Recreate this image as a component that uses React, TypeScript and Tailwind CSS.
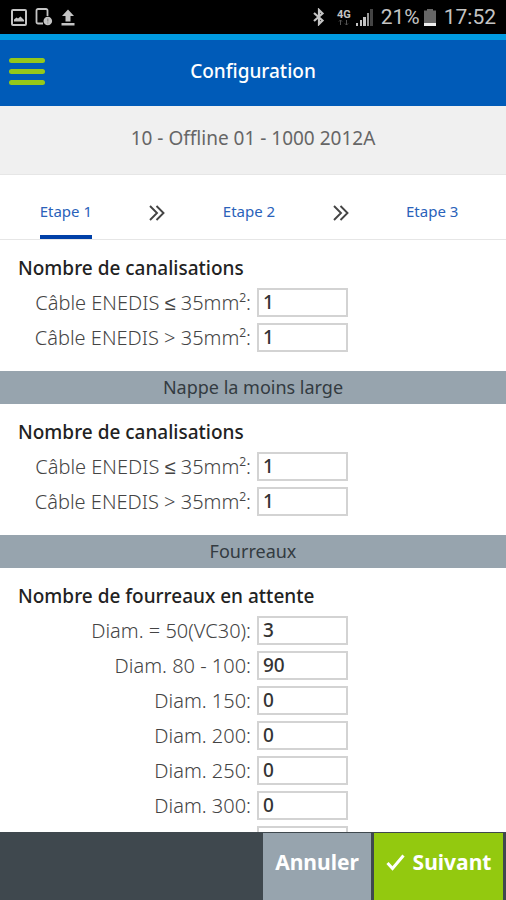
import React from 'react';

type Field = { id: string; label?: string; value: string };

const CABLES_TOP: Field[] = [
    { id: 'top-lte35', label: 'Câble ENEDIS ≤ 35mm²:', value: '1' },
    { id: 'top-gt35', label: 'Câble ENEDIS > 35mm²:', value: '1' },
];

const CABLES_NAPPE: Field[] = [
    { id: 'nappe-lte35', label: 'Câble ENEDIS ≤ 35mm²:', value: '1' },
    { id: 'nappe-gt35', label: 'Câble ENEDIS > 35mm²:', value: '1' },
];

const FOURREAUX: Field[] = [
    { id: 'diam-50', label: 'Diam. = 50(VC30):', value: '3' },
    { id: 'diam-80', label: 'Diam. 80 - 100:', value: '90' },
    { id: 'diam-150', label: 'Diam. 150:', value: '0' },
    { id: 'diam-200', label: 'Diam. 200:', value: '0' },
    { id: 'diam-250', label: 'Diam. 250:', value: '0' },
    { id: 'diam-300', label: 'Diam. 300:', value: '0' },
    { id: 'diam-other', value: '' },
];

const StatusBar: React.FC = () => (
    <div className="flex h-[34px] shrink-0 items-center justify-between bg-black pl-[11px] pr-[10px] text-[#c4c4c4]">
        <div className="flex items-center gap-2">
            <svg width="16" height="17" viewBox="0 0 16 17" fill="none" stroke="currentColor" strokeWidth="2">
                <rect x="1" y="1" width="14" height="15" rx="1" />
                <path d="M3 12.500V10.500L5.500 8.500L7 9.500L9.500 7.500L13 11V12.500Z" fill="currentColor" stroke="none" />
            </svg>
            <svg width="18" height="18" viewBox="0 0 18 18" fill="none" stroke="currentColor" strokeWidth="1.800">
                <path d="M12.500 8V2.500A1.500 1.500 0 0 0 11 1H3A1.500 1.500 0 0 0 1.500 2.500V14A1.500 1.500 0 0 0 3 15.500H8" />
                <circle cx="12.800" cy="13" r="4.300" fill="currentColor" stroke="none" />
                <path d="M12.800 10.500V13.500M12.800 14.500V15.500" stroke="#888" strokeWidth="1.200" />
            </svg>
            <svg width="14" height="17" viewBox="0 0 14 17" fill="currentColor">
                <path d="M7 0.500L13 7H9.500V12.500H4.500V7H1Z" />
                <path d="M0.500 14H13.500V16.500H0.500Z" />
            </svg>
        </div>
        <div className="flex items-center gap-1 font-[Roboto,sans-serif]">
            <svg className="mr-2" width="12" height="18" viewBox="0 0 12 18" fill="none" stroke="currentColor" strokeWidth="2.200">
                <path d="M1 5L9.500 12.500L6 16V2L9.500 5.500L1 13" />
            </svg>
            <div className="flex flex-col items-center text-[11px] font-bold leading-[10px]">
                <span>4G</span>
                <svg width="11" height="5" viewBox="0 0 11 5" fill="none" stroke="#555">
                    <path d="M2.500 0V5M1 1.500L2.500 0L4 1.500M8.500 0V5M7 3.500L8.500 5L10 3.500" />
                </svg>
            </div>
            <svg width="18" height="17" viewBox="0 0 18 17" fill="currentColor">
                <rect x="1" y="14" width="2" height="3" />
                <rect x="5" y="11" width="2" height="6" />
                <rect x="8" y="8" width="3" height="9" />
                <rect x="12" y="4" width="2" height="13" fill="#999" />
                <rect x="15" y="0" width="3" height="17" fill="#444" />
            </svg>
            <span className="ml-1 text-[21px] leading-6">21%</span>
            <svg width="12" height="17" viewBox="0 0 12 17">
                <path d="M3 0H9V1.500H12V17H0V1.500H3Z" fill="#666" />
                <rect y="14" width="12" height="3" fill="#eee" />
            </svg>
            <span className="ml-1 text-[21px] leading-6">17:52</span>
        </div>
    </div>
);

const Chevrons: React.FC = () => (
    <svg width="16" height="16" viewBox="0 0 16 16" fill="none" stroke="#444" strokeWidth="1.900">
        <path d="M1 1L8 8L1 15M7.500 1L14.500 8L7.500 15" />
    </svg>
);

const Tab: React.FC<{ label: string; active?: boolean }> = ({ label, active }) => (
    <button
        className={
            active
                ? 'h-full border-b-4 border-[#0040a8] pt-3 text-[15px] text-[#2a62ba]'
                : 'h-full border-b-4 border-transparent pt-3 text-[15px] text-[#2a62ba]'
        }
    >
        {label}
    </button>
);

const FieldGroup: React.FC<{ title: string; fields: Field[] }> = ({ title, fields }) => (
    <section className="py-4">
        <h2 className="mb-[5px] px-[18px] text-[19px] font-medium leading-6 text-[#222]">{title}</h2>
        {fields.map((field) => (
            <div key={field.id} className="flex h-[35px] items-center">
                <label htmlFor={field.id} className="w-1/2 pr-0.5 text-right text-[20px] font-light leading-6 text-[#444]">
                    {field.label}
                </label>
                <input
                    id={field.id}
                    type="text"
                    inputMode="numeric"
                    defaultValue={field.value}
                    className="ml-1 h-[29px] w-[91px] border-2 border-[#d3d3d3] bg-white px-1 pb-0.5 text-[19px] font-medium leading-6 text-[#333] outline-none"
                />
            </div>
        ))}
    </section>
);

const Divider: React.FC<{ label: string }> = ({ label }) => (
    <div className="h-[33px] bg-[#97a4ae] text-center text-[18px] leading-8 text-[#333b41]">{label}</div>
);

const App: React.FC = () => {
    return (
        <div className="flex h-screen flex-col bg-white font-['Noto_Sans',sans-serif]">
            <StatusBar />
            <header className="flex h-[72px] shrink-0 items-center border-t-[6px] border-[#0099e0] bg-[#005bb8] pb-1">
                <button aria-label="Menu" className="flex w-[54px] flex-col gap-1.5 px-[9px]">
                    <span className="h-[5px] w-full rounded-full bg-[#95c81a]" />
                    <span className="h-[5px] w-full rounded-full bg-[#95c81a]" />
                    <span className="h-[5px] w-full rounded-full bg-[#95c81a]" />
                </button>
                <h1 className="flex-1 pr-[54px] text-center text-[19px] font-medium leading-6 text-white">Configuration</h1>
            </header>
            <div className="h-[68px] shrink-0 bg-[#f0f0f0] text-center text-[19px] leading-[64px] text-[#666]">
                10 - Offline 01 - 1000 2012A
            </div>
            <nav className="grid h-[66px] shrink-0 grid-cols-5 items-center justify-items-center border-y border-[#e6e6e6] pl-5 pr-7">
                <Tab label="Etape 1" active />
                <div className="pt-3">
                    <Chevrons />
                </div>
                <Tab label="Etape 2" />
                <div className="pt-3">
                    <Chevrons />
                </div>
                <Tab label="Etape 3" />
            </nav>
            <main className="min-h-0 flex-1 overflow-y-auto [scrollbar-width:none]">
                <FieldGroup title="Nombre de canalisations" fields={CABLES_TOP} />
                <Divider label="Nappe la moins large" />
                <FieldGroup title="Nombre de canalisations" fields={CABLES_NAPPE} />
                <Divider label="Fourreaux" />
                <FieldGroup title="Nombre de fourreaux en attente" fields={FOURREAUX} />
            </main>
            <footer className="flex h-[68px] shrink-0 justify-end gap-[3px] bg-[#3f484e] pr-[3px] pt-px text-[21px] font-bold text-white">
                <button className="w-[108px] bg-[#97a4ae] pb-2">Annuler</button>
                <button className="flex w-[129px] items-center justify-center gap-2 bg-[#93c90f] pb-2">
                    <svg width="19" height="17" viewBox="0 0 19 17" fill="none" stroke="currentColor" strokeWidth="3">
                        <path d="M1.500 9L6.500 14.500L17.500 1.500" />
                    </svg>
                    Suivant
                </button>
            </footer>
        </div>
    );
};

export default App;
